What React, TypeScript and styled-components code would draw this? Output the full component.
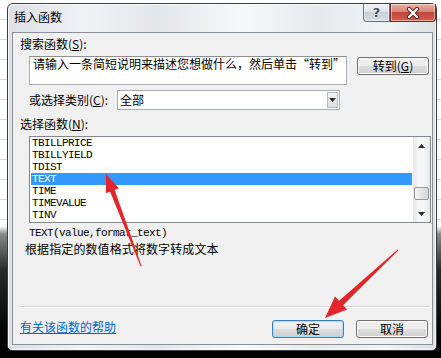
import React from "react";
import styled, { createGlobalStyle } from "styled-components";

const Global = createGlobalStyle`
  html, body { margin: 0; padding: 0; }
  body {
    background: #000;
    font-family: "Noto Sans CJK SC", "Noto Sans", sans-serif;
    font-size: 12px;
  }
`;

const Page = styled.div`
  position: relative;
  width: 441px;
  height: 358px;
  overflow: hidden;
  display: flex;
  align-items: flex-start;
  background:
    repeating-linear-gradient(to bottom, transparent 0, transparent 19px, #d6d6d6 19px, #d6d6d6 20px) 0 0 / 100% 225px no-repeat,
    linear-gradient(to bottom, #fff 0, #fff 226px, #8a8a8a 234px, #2a2a2a 270px, #050505 330px, #000 100%);
`;

const Window = styled.div`
  box-sizing: border-box;
  margin: 3px 0 0 7px;
  width: 430px;
  height: 348px;
  border: 1px solid #3a3d40;
  border-radius: 6px 6px 5px 5px;
  padding: 0 3px 5px 4px;
  display: flex;
  flex-direction: column;
  background: linear-gradient(90deg, #dde0e4 0%, #f0f1f3 18%, #e3e6e9 35%, #f7f8f9 55%, #e6e8eb 72%, #f1f2f4 88%, #dde0e3 100%);
  box-shadow: inset 0 0 0 1px rgba(255, 255, 255, 0.75);
`;

const TitleBar = styled.div`
  height: 28px;
  margin: 0 -3px 0 -4px;
  display: flex;
  align-items: flex-start;
  flex-shrink: 0;
`;

const Title = styled.div`
  padding-left: 6px;
  line-height: 26px;
  font-size: 12px;
  color: #000;
`;

const Captions = styled.div`
  margin-left: auto;
  display: flex;
`;

const CaptionButton = styled.div<{ $kind: "help" | "close" }>`
  box-sizing: border-box;
  height: 18px;
  width: ${(p) => (p.$kind === "help" ? 27 : 46)}px;
  display: flex;
  align-items: center;
  justify-content: center;
  border: 1px solid ${(p) => (p.$kind === "help" ? "#6a7078" : "#6b2e2a")};
  border-top: none;
  border-radius: ${(p) => (p.$kind === "help" ? "0 0 0 4px" : "0 0 4px 0")};
  background: ${(p) =>
    p.$kind === "help"
      ? "linear-gradient(#f1f3f5 0%, #dfe3e8 45%, #c9d0d7 50%, #d8dde3 100%)"
      : "linear-gradient(#eab0a6 0%, #d98576 45%, #c4473a 50%, #d35e4f 100%)"};
  box-shadow: inset 0 0 0 1px rgba(255, 255, 255, 0.45);
  color: #4a4f55;
  font: bold 13px/1 "DejaVu Sans", sans-serif;
  text-shadow: 0 0 2px #fff;
`;

const Client = styled.div`
  flex: 1;
  box-sizing: border-box;
  border: 1px solid #8a9098;
  background: #f0f0f0;
  padding: 0 0 0 7px;
  display: flex;
  flex-direction: column;
  color: #000;
  min-height: 0;
`;

const FieldLabel = styled.div<{ $top: number; $indent?: number; $width?: number }>`
  margin: ${(p) => p.$top}px 0 0 ${(p) => p.$indent ?? 0}px;
  ${(p) => (p.$width ? `width: ${p.$width}px; flex-shrink: 0;` : "")}
  line-height: 14px;
  white-space: nowrap;
`;

const SearchRow = styled.div`
  display: flex;
  align-items: flex-start;
  margin-top: 5px;
`;

const SearchBox = styled.div`
  box-sizing: border-box;
  width: 318px;
  height: 29px;
  margin-left: 9px;
  border: 1px solid #abadb3;
  border-top-color: #8e8f8f;
  background: #fff;
  padding: 0 0 0 3px;
  line-height: 13px;
  white-space: nowrap;
  overflow: hidden;
`;

const Button = styled.button<{ $default?: boolean }>`
  box-sizing: border-box;
  width: 72px;
  height: 18px;
  padding: 0;
  flex-shrink: 0;
  font: 12px/16px "Noto Sans CJK SC", sans-serif;
  color: #000;
  border: 1px solid ${(p) => (p.$default ? "#3c7fb1" : "#707070")};
  border-radius: 3px;
  background: linear-gradient(#f2f2f2 0%, #ebebeb 50%, #dddddd 51%, #cfcfcf 100%);
  box-shadow: inset 0 0 0 1px ${(p) => (p.$default ? "#a6dcf7" : "#fcfcfc")};
`;

const SearchButton = styled(Button)`
  margin: 1px 0 0 10px;
`;

const CategoryRow = styled.div`
  display: flex;
  align-items: center;
  margin-top: 5px;
  height: 20px;
`;

const Select = styled.div`
  box-sizing: border-box;
  width: 223px;
  height: 20px;
  border: 1px solid #a5acb5;
  background: #fff;
  display: flex;
`;

const SelectValue = styled.div`
  flex: 1;
  padding-left: 2px;
  line-height: 18px;
`;

const SelectArrow = styled.div`
  box-sizing: border-box;
  width: 11px;
  margin: 1px;
  border: 1px solid #b8bcc2;
  background: linear-gradient(#f6f6f6, #dedede);
  display: flex;
  align-items: center;
  justify-content: center;
`;

const ListBox = styled.div`
  box-sizing: border-box;
  margin: 5px 0 0 9px;
  width: 402px;
  height: 87px;
  border: 1px solid #828790;
  background: #fff;
  display: flex;
  flex-shrink: 0;
`;

const ListItems = styled.div`
  flex: 1;
  display: flex;
  flex-direction: column;
`;

const ListItem = styled.div<{ $selected?: boolean }>`
  height: 12px;
  line-height: 12px;
  font-family: "Liberation Mono", monospace;
  font-size: 11px;
  letter-spacing: -0.6px;
  padding-left: ${(p) => (p.$selected ? 1 : 2)}px;
  margin: 0 ${(p) => (p.$selected ? 1 : 0)}px 0 ${(p) => (p.$selected ? 1 : 0)}px;
  background: ${(p) => (p.$selected ? "#3399ff" : "transparent")};
  color: ${(p) => (p.$selected ? "#fff" : "#000")};
  white-space: nowrap;
`;

const ScrollBar = styled.div`
  width: 17px;
  display: flex;
  flex-direction: column;
  background: linear-gradient(90deg, #e6e6e6, #f5f5f5 30%, #f5f5f5 70%, #e8e8e8);
`;

const ScrollArrow = styled.div`
  height: 17px;
  display: flex;
  align-items: center;
  justify-content: center;
  flex-shrink: 0;
`;

const ScrollTrack = styled.div`
  flex: 1;
  padding: 33px 1px 0 1px;
`;

const ScrollThumb = styled.div`
  box-sizing: border-box;
  height: 13px;
  border: 1px solid #989898;
  border-radius: 2px;
  background: linear-gradient(90deg, #f3f3f3, #e4e4e4 50%, #d6d6d6);
`;

const Syntax = styled.div`
  margin: 4px 0 0 9px;
  line-height: 13px;
  font-family: "Liberation Mono", monospace;
  font-size: 11px;
  letter-spacing: -0.6px;
`;

const Description = styled.div`
  margin: 2px 0 0 5px;
  line-height: 14px;
  letter-spacing: 0.1px;
  white-space: nowrap;
`;

const Separator = styled.div`
  margin-top: 50px;
  width: 410px;
  border-top: 1px solid #d5d5d5;
  border-bottom: 1px solid #fbfbfb;
`;

const BottomRow = styled.div`
  margin-top: 12px;
  height: 18px;
  display: flex;
  align-items: center;
  gap: 12px;
  padding-right: 4px;
`;

const HelpLink = styled.a`
  margin-bottom: 4px;
  margin-right: auto;
  line-height: 14px;
  color: #0066cc;
  text-decoration: underline;
`;

const Overlay = styled.svg`
  position: absolute;
  left: 0;
  top: 0;
  pointer-events: none;
`;

const Tri = ({ down }: { down?: boolean }) => (
  <svg width="7" height="4" viewBox="0 0 7 4">
    <path d={down ? "M0 0 H7 L3.5 4 Z" : "M0 4 H7 L3.5 0 Z"} fill="#2b2b2b" />
  </svg>
);

const items = ["TBILLPRICE", "TBILLYIELD", "TDIST", "TEXT", "TIME", "TIMEVALUE", "TINV"];

export default function App() {
  return (
    <>
      <Global />
      <Page>
        <Window>
          <TitleBar>
            <Title>插入函数</Title>
            <Captions>
              <CaptionButton $kind="help">?</CaptionButton>
              <CaptionButton $kind="close">
                <svg width="14" height="12" viewBox="0 0 14 12">
                  <path d="M3 2 L11 10 M11 2 L3 10" stroke="#5a1c18" strokeWidth="4.2" strokeLinecap="round" />
                  <path d="M3 2 L11 10 M11 2 L3 10" stroke="#fff" strokeWidth="2.4" strokeLinecap="round" />
                </svg>
              </CaptionButton>
            </Captions>
          </TitleBar>
          <Client>
            <FieldLabel $top={4}>
              搜索函数(<u>S</u>):
            </FieldLabel>
            <SearchRow>
              <SearchBox>请输入一条简短说明来描述您想做什么，然后单击“转到”</SearchBox>
              <SearchButton>
                转到(<u>G</u>)
              </SearchButton>
            </SearchRow>
            <CategoryRow>
              <FieldLabel $top={0} $indent={9} $width={88}>
                或选择类别(<u>C</u>):
              </FieldLabel>
              <Select>
                <SelectValue>全部</SelectValue>
                <SelectArrow>
                  <Tri down />
                </SelectArrow>
              </Select>
            </CategoryRow>
            <FieldLabel $top={7}>
              选择函数(<u>N</u>):
            </FieldLabel>
            <ListBox>
              <ListItems>
                {items.map((it) => (
                  <ListItem key={it} $selected={it === "TEXT"}>
                    {it}
                  </ListItem>
                ))}
              </ListItems>
              <ScrollBar>
                <ScrollArrow>
                  <Tri />
                </ScrollArrow>
                <ScrollTrack>
                  <ScrollThumb />
                </ScrollTrack>
                <ScrollArrow>
                  <Tri down />
                </ScrollArrow>
              </ScrollBar>
            </ListBox>
            <Syntax>TEXT(value,format_text)</Syntax>
            <Description>根据指定的数值格式将数字转成文本</Description>
            <Separator />
            <BottomRow>
              <HelpLink href="#">有关该函数的帮助</HelpLink>
              <Button $default>确定</Button>
              <Button>取消</Button>
            </BottomRow>
          </Client>
        </Window>
        <Overlay width="441" height="358" viewBox="0 0 441 358">
          <polygon
            points="106,174 118.9,188.3 114.7,189.9 141.5,265.8 140.5,266.2 110.1,191.7 105.9,193.3"
            fill="#e3262b"
          />
          <polygon
            points="325,318 335,296.4 339.1,300.8 397.7,249.6 398.3,250.4 343.1,305.2 347.2,309.6"
            fill="#e3262b"
          />
        </Overlay>
      </Page>
    </>
  );
}
